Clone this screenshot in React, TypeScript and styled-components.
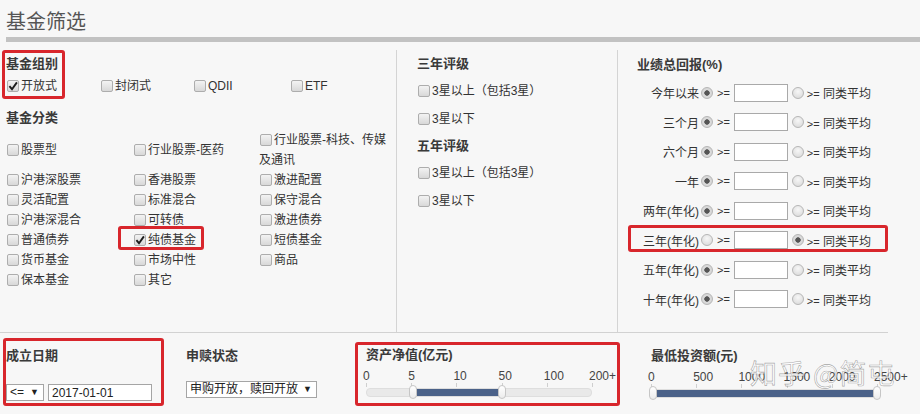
import styled, { createGlobalStyle } from "styled-components";

const GlobalStyle = createGlobalStyle`
  html, body { margin: 0; padding: 0; background: #f7f7f7; }
  body {
    font-family: "Liberation Sans", "Noto Sans CJK SC", sans-serif;
    font-size: 12px;
    color: #333;
  }
`;

// red annotation frame drawn over an element
const markBox = (inset?: string) =>
  inset
    ? `&::after {
        content: "";
        position: absolute;
        inset: ${inset};
        border: 3px solid #d8262c;
        border-radius: 3px;
        pointer-events: none;
      }`
    : "";

const Page = styled.div`
  position: relative;
  width: 920px;
  height: 414px;
  overflow: hidden;
`;

const PageTitle = styled.h1`
  margin: 0;
  padding: 10px 0 0 6px;
  height: 27px;
  font-size: 20px;
  line-height: 24px;
  font-weight: normal;
  color: #555;
`;

const TitleBar = styled.div`
  margin-left: 6px;
  height: 5px;
  background: #c2c2c2;
`;

const TopSection = styled.div`
  display: grid;
  grid-template-columns: 396px 221px 271px;
  width: 888px;
  height: 282px;
  margin-top: 8px;
  border-bottom: 1px solid #d2d2d2;
`;

const Column = styled.div<{ $divider?: boolean; $pad: string }>`
  padding: ${(p) => p.$pad};
  border-left: ${(p) => (p.$divider ? "1px solid #d4d4d4" : "none")};
`;

const Label = styled.div<{ $h?: number; $mt?: number }>`
  font-size: 13px;
  font-weight: bold;
  color: #3a3a3a;
  line-height: ${(p) => p.$h ?? 16}px;
  margin-top: ${(p) => p.$mt ?? 0}px;
`;

const GroupRow = styled.div`
  display: grid;
  grid-template-columns: 94px 93px 97px auto;
  margin-top: 6px;
  line-height: 16px;
`;

const TypeGrid = styled.div`
  display: grid;
  grid-template-columns: 127px 126px 130px;
  align-items: center;
  margin-top: 4px;
  line-height: 20px;
`;

const Option = styled.div<{ $mark?: string; $lh?: number }>`
  position: relative;
  display: block;
  ${(p) => (p.$lh ? `line-height: ${p.$lh}px;` : "")}
  ${(p) => markBox(p.$mark)}
`;

const Box = styled.span`
  display: inline-flex;
  align-items: center;
  justify-content: center;
  width: 12px;
  height: 12px;
  box-sizing: border-box;
  margin: 0 2px 0 1px;
  vertical-align: middle;
  position: relative;
  top: -1px;
  border: 1px solid #adadad;
  border-radius: 2px;
  background: linear-gradient(#f3f3f3, #d8d8d8);
`;

const Radio = styled.span<{ $on?: boolean; $ml: number }>`
  display: block;
  flex: none;
  width: 12px;
  height: 12px;
  margin-left: ${(p) => p.$ml}px;
  box-sizing: border-box;
  border-radius: 50%;
  border: 1px solid #b6b6b6;
  background: ${(p) =>
    p.$on
      ? "radial-gradient(circle, #555 0 2.4px, #dcdcdc 3px, #cfcfcf 100%)"
      : "radial-gradient(circle at 50% 35%, #f7f7f7, #d6d6d6)"};
`;

const ReturnRow = styled.div<{ $mark?: string }>`
  position: relative;
  display: flex;
  align-items: center;
  height: 29.5px;
  ${(p) => markBox(p.$mark)}
`;

const RowLabel = styled.span`
  width: 62px;
  text-align: right;
  white-space: nowrap;
`;

const OpText = styled.span<{ $ml: number }>`
  margin-left: ${(p) => p.$ml}px;
  white-space: nowrap;
`;

const Op = styled.span`
  margin-left: 4px;
  font-size: 11px;
`;

const NumInput = styled.input`
  width: 54px;
  height: 18px;
  margin: 0 0 0 4px;
  box-sizing: border-box;
  border: 1px solid #a9a9a9;
  background: #fff;
  padding: 0 2px;
`;

const BottomSection = styled.div`
  display: grid;
  grid-template-columns: 180px 180px 285px 1fr;
  padding-left: 6px;
  height: 81px;
`;

const Panel = styled.div<{ $top: number; $mark?: string }>`
  position: relative;
  padding-top: ${(p) => p.$top}px;
  ${(p) => markBox(p.$mark)}
`;

const Controls = styled.div<{ $mt: number }>`
  display: flex;
  gap: 4px;
  margin-top: ${(p) => p.$mt}px;
`;

const SelectBox = styled.div<{ $w: number }>`
  display: flex;
  align-items: center;
  justify-content: space-between;
  width: ${(p) => p.$w}px;
  height: 17px;
  box-sizing: border-box;
  padding: 0 4px 0 3px;
  border: 1px solid #a5a5a5;
  background: #fff;
  line-height: 15px;
  color: #222;
  white-space: nowrap;
`;

const Arrow = styled.span`
  font-size: 9px;
`;

const DateInput = styled.input`
  width: 104px;
  height: 17px;
  margin: 0;
  box-sizing: border-box;
  padding: 0 3px;
  border: 1px solid #a5a5a5;
  background: #fff;
  font-family: "Liberation Sans", sans-serif;
  font-size: 12px;
  color: #222;
`;

const SliderBox = styled.div`
  width: 226px;
  margin-top: 6px;
`;

const Scale = styled.div`
  position: relative;
  height: 14px;
  line-height: 14px;
  color: #444;
`;

const ScaleText = styled.span`
  position: absolute;
  top: 0;
  transform: translateX(-3px);
  white-space: nowrap;
`;

const TickRow = styled.div`
  position: relative;
  height: 5px;
`;

const Tick = styled.span`
  position: absolute;
  top: 0;
  width: 1px;
  height: 4px;
  background: #cfcfcf;
`;

const Track = styled.div`
  position: relative;
  height: 9px;
  box-sizing: border-box;
  border: 1px solid #dedede;
  border-radius: 4px;
  background: #e9e9e9;
`;

const Fill = styled.span`
  position: absolute;
  top: 0;
  bottom: 0;
  background: #4b6289;
`;

const Handle = styled.span`
  position: absolute;
  top: -4px;
  width: 8px;
  height: 14px;
  margin-left: -3px;
  box-sizing: border-box;
  border: 1px solid #c6c6c6;
  border-radius: 4px;
  background: linear-gradient(#ffffff, #ececec);
`;

const Watermark = styled.div`
  position: absolute;
  left: 750px;
  top: 357px;
  font-family: "Noto Sans CJK SC", sans-serif;
  font-size: 27px;
  line-height: 32px;
  letter-spacing: 1px;
  color: rgba(255, 255, 255, 0.75);
  -webkit-text-stroke: 0.6px rgba(90, 90, 90, 0.55);
  white-space: nowrap;
  pointer-events: none;
`;

function CheckMark() {
  return (
    <svg width="10" height="10" viewBox="0 0 10 10">
      <path d="M1.4 5.2 L4 8.2 L8.9 1.4" fill="none" stroke="#1c1c1c" strokeWidth="1.9" />
    </svg>
  );
}

function Check({ on }: { on?: boolean }) {
  return <Box>{on && <CheckMark />}</Box>;
}

const groups = ["开放式", "封闭式", "QDII", "ETF"];

const fundTypes = [
  "股票型", "行业股票-医药", "行业股票-科技、传媒及通讯",
  "沪港深股票", "香港股票", "激进配置",
  "灵活配置", "标准混合", "保守混合",
  "沪港深混合", "可转债", "激进债券",
  "普通债券", "纯债基金", "短债基金",
  "货币基金", "市场中性", "商品",
  "保本基金", "其它",
];

const ratings = [
  { title: "三年评级", items: ["3星以上（包括3星）", "3星以下"] },
  { title: "五年评级", items: ["3星以上（包括3星）", "3星以下"] },
];

const periods = ["今年以来", "三个月", "六个月", "一年", "两年(年化)", "三年(年化)", "五年(年化)", "十年(年化)"];

function RangeSlider({ labels, from, to }: { labels: string[]; from: number; to: number }) {
  const step = 100 / (labels.length - 1);
  return (
    <SliderBox>
      <Scale>
        {labels.map((l, i) => (
          <ScaleText key={l} style={{ left: `${i * step}%` }}>{l}</ScaleText>
        ))}
      </Scale>
      <TickRow>
        {labels.map((l, i) => (
          <Tick key={l} style={{ left: `${i * step}%` }} />
        ))}
      </TickRow>
      <Track>
        <Fill style={{ left: `calc(${from}% + 5px)`, right: `calc(${100 - to}% + 2px)` }} />
        <Handle style={{ left: `${from}%` }} />
        <Handle style={{ left: `${to}%` }} />
      </Track>
    </SliderBox>
  );
}

export default function App() {
  return (
    <Page>
      <GlobalStyle />
      <PageTitle>基金筛选</PageTitle>
      <TitleBar />

      <TopSection>
        <Column $pad="6px 0 0 6px">
          <Label>基金组别</Label>
          <GroupRow>
            {groups.map((g, i) => (
              <Option key={g} $mark={i === 0 ? "-28px 35px -5px -4px" : undefined}>
                <Check on={i === 0} />
                {g}
              </Option>
            ))}
          </GroupRow>
          <Label $mt={16}>基金分类</Label>
          <TypeGrid>
            {fundTypes.map((t) => (
              <Option key={t} $mark={t === "纯债基金" ? "-4px 55px 0 -15px" : undefined}>
                <Check on={t === "纯债基金"} />
                {t}
              </Option>
            ))}
          </TypeGrid>
        </Column>

        <Column $divider $pad="1px 0 0 20px">
          {ratings.map((r) => (
            <div key={r.title}>
              <Label $h={26}>{r.title}</Label>
              {r.items.map((it) => (
                <Option key={it} $lh={28}>
                  <Check />
                  {it}
                </Option>
              ))}
            </div>
          ))}
        </Column>

        <Column $divider $pad="2px 0 0 19px">
          <Label $h={26}>业绩总回报(%)</Label>
          {periods.map((p) => {
            const avg = p === "三年(年化)";
            return (
              <ReturnRow key={p} $mark={avg ? "-1px 0 3px -9px" : undefined}>
                <RowLabel>{p}</RowLabel>
                <Radio $ml={2} $on={!avg} />
                <Op>&gt;=</Op>
                <NumInput readOnly />
                <Radio $ml={4} $on={avg} />
                <OpText $ml={3}>
                  <Op as="span" style={{ marginLeft: 0 }}>&gt;=</Op> 同类平均
                </OpText>
              </ReturnRow>
            );
          })}
        </Column>
      </TopSection>

      <BottomSection>
        <Panel $top={15} $mark="5px 22px 8px -3px">
          <Label>成立日期</Label>
          <Controls $mt={20}>
            <SelectBox $w={38}>
              &lt;=<Arrow>▼</Arrow>
            </SelectBox>
            <DateInput readOnly defaultValue="2017-01-01" />
          </Controls>
        </Panel>
        <Panel $top={15}>
          <Label>申赎状态</Label>
          <Controls $mt={17}>
            <SelectBox $w={131}>
              申购开放，赎回开放<Arrow>▼</Arrow>
            </SelectBox>
          </Controls>
        </Panel>
        <Panel $top={14} $mark="9px 31px 8px -11px">
          <Label>资产净值(亿元)</Label>
          <RangeSlider labels={["0", "5", "10", "50", "100", "200+"]} from={20} to={60} />
        </Panel>
        <Panel $top={15}>
          <Label>最低投资额(元)</Label>
          <RangeSlider labels={["0", "500", "1000", "1500", "2000", "2500+"]} from={0} to={100} />
        </Panel>
      </BottomSection>

      <Watermark>知乎 @简屯</Watermark>
    </Page>
  );
}
